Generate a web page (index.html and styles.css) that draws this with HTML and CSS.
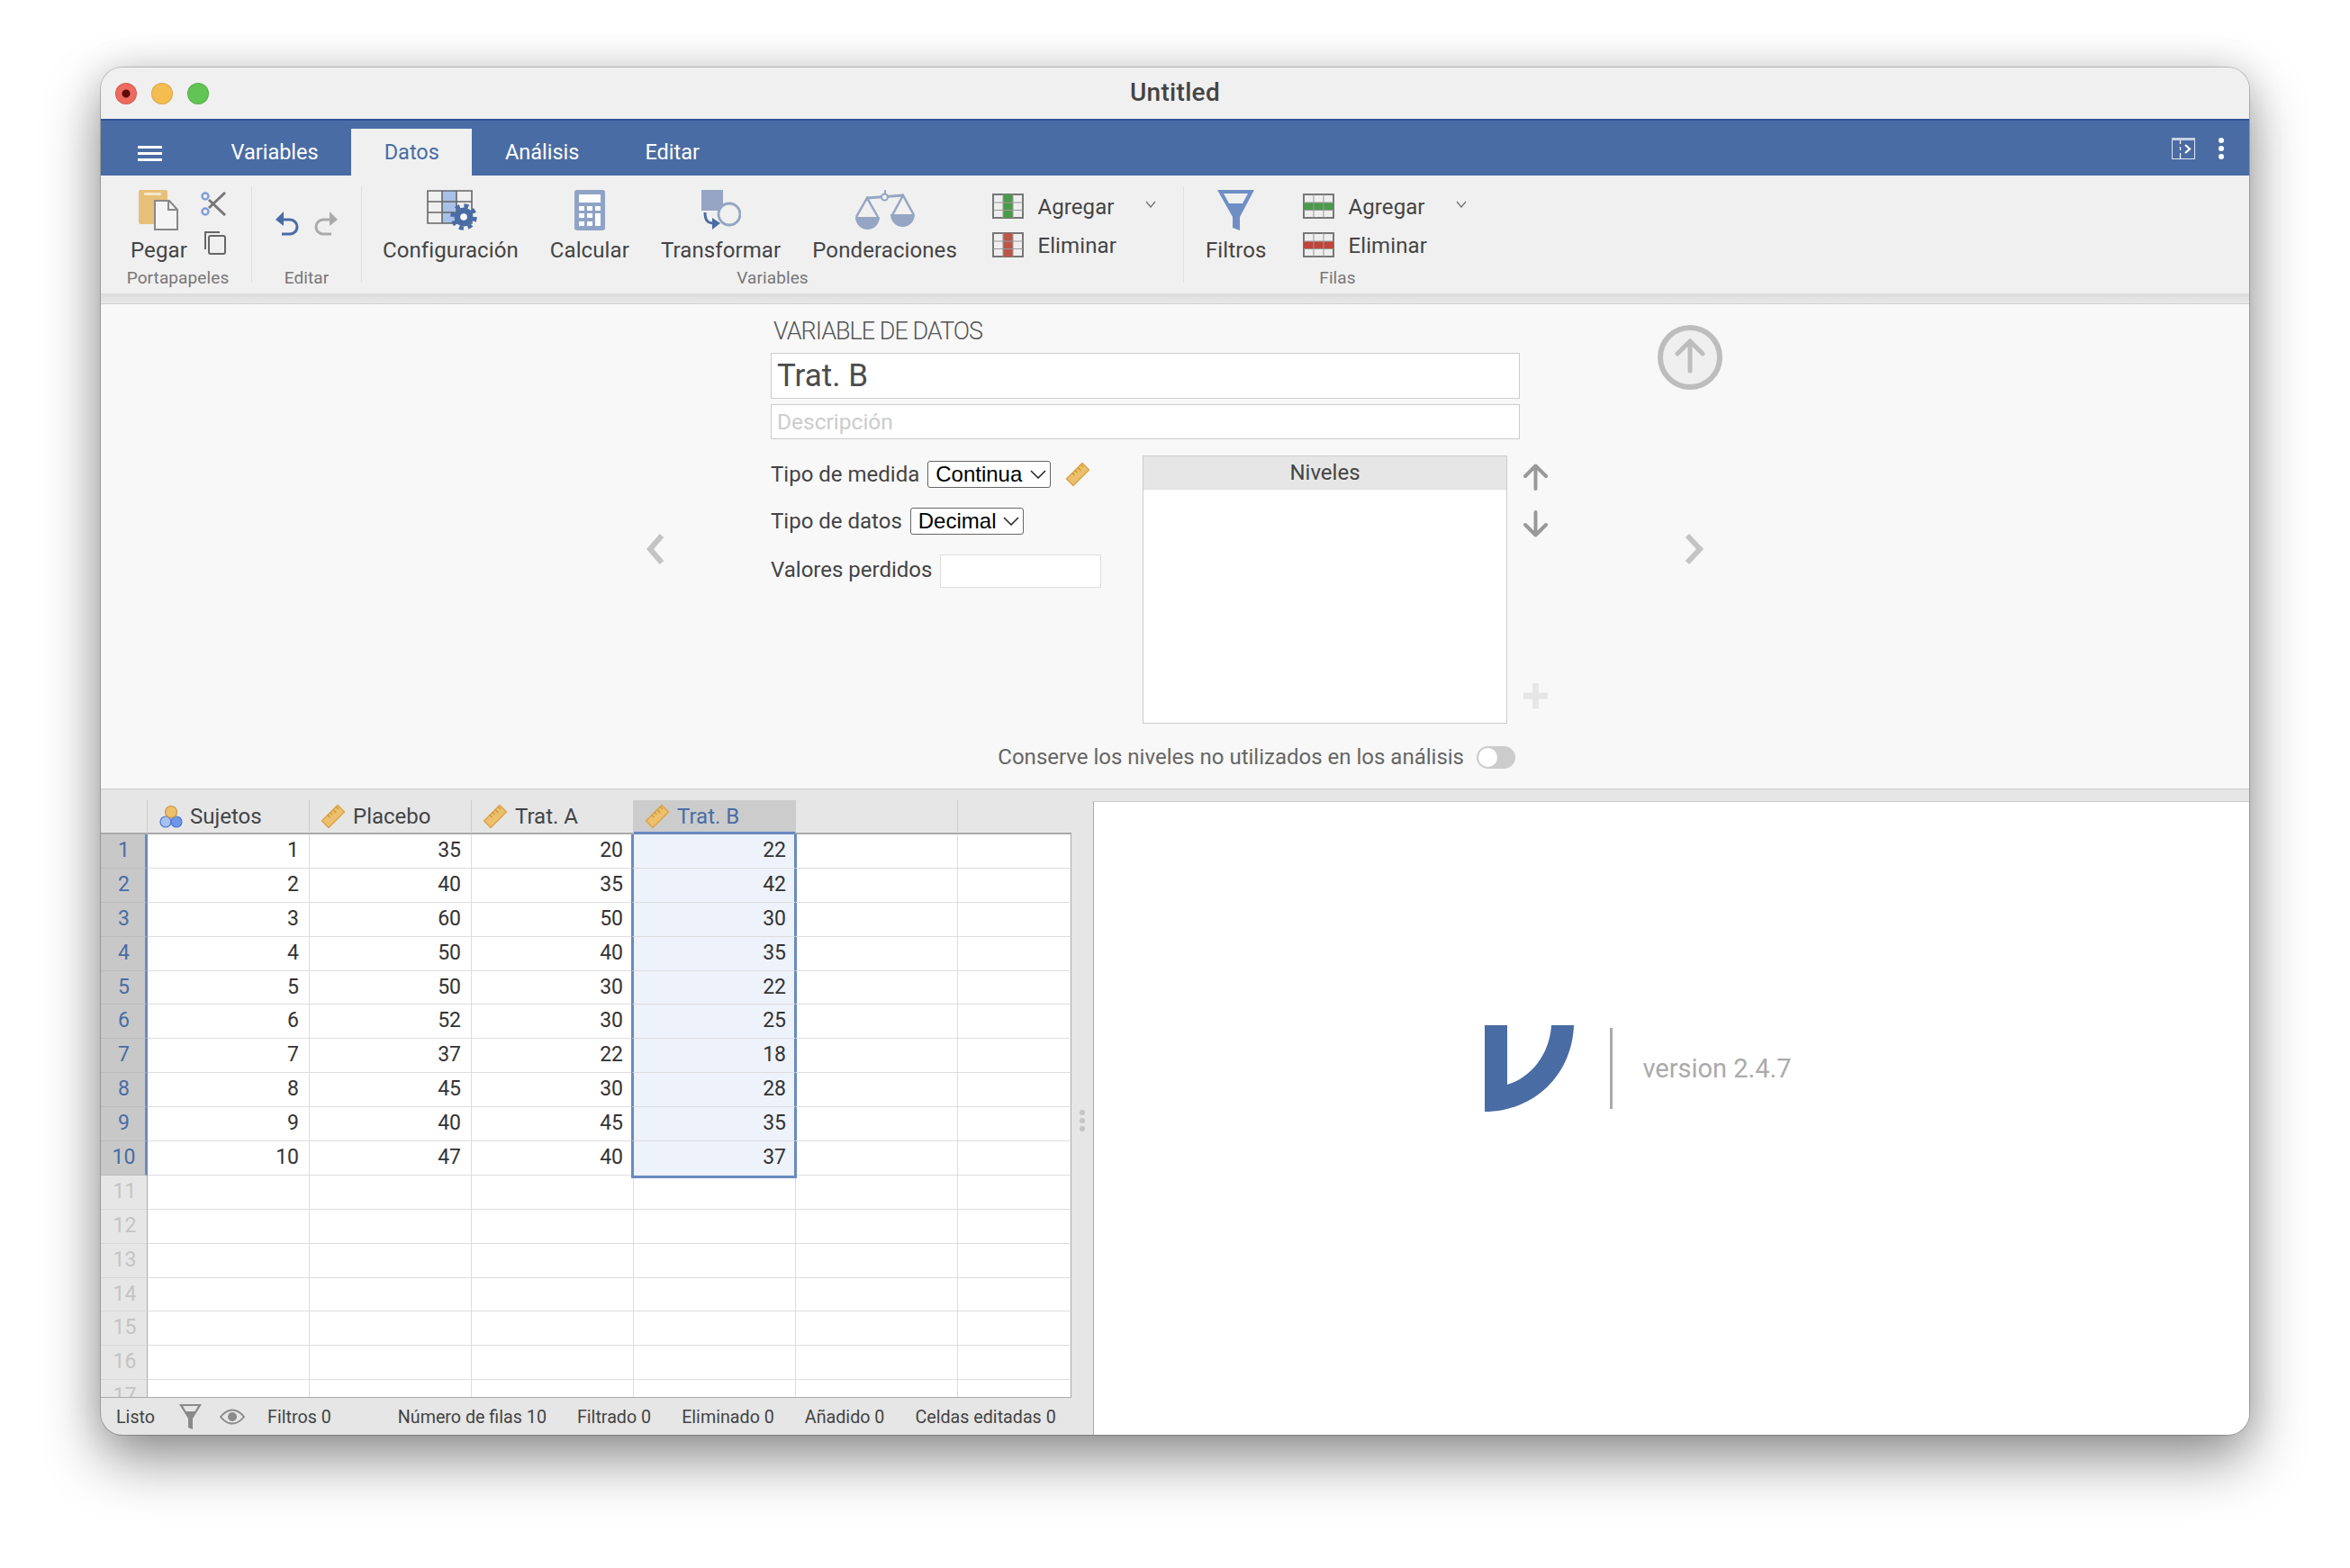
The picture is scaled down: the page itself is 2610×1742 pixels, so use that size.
FILE: index.html
```html
<!DOCTYPE html>
<html>
	<head>
		<title>Untitled</title>
		<link rel="stylesheet" href="styles.css">
	</head>

	<body>
		<svg class="defs" width="0" height="0">
			<symbol id="ruler" viewBox="0 0 28 28">
				<path d="M19 1.5L26.5 9 9 26.5 1.5 19z" fill="#ecc06c" stroke="#dba44a" stroke-width="1.5" stroke-linejoin="round"/>
				<path d="M8 12.500l2.500 2.500M11 9.500l2.500 2.500M14 6.500l3.500 3.500M17.500 3.500l2.500 2.500" stroke="#c99536" stroke-width="1.200" fill="none"/>
			</symbol>
			<symbol id="colGreen" viewBox="0 0 35 28">
				<rect x="1" y="1" width="33" height="26" fill="#eee" stroke="#777" stroke-width="2"/>
				<rect x="12" y="1" width="11" height="26" fill="#4c9a4c"/>
				<path d="M12 1v26M23 1v26M1 10h33M1 18.500h33" stroke="#999" stroke-width="1"/>
			</symbol>
			<symbol id="colRed" viewBox="0 0 35 28">
				<rect x="1" y="1" width="33" height="26" fill="#eee" stroke="#777" stroke-width="2"/>
				<rect x="12" y="1" width="11" height="26" fill="#b9564a"/>
				<path d="M12 1v26M23 1v26M1 10h33M1 18.500h33" stroke="#999" stroke-width="1"/>
			</symbol>
			<symbol id="rowGreen" viewBox="0 0 35 28">
				<rect x="1" y="1" width="33" height="26" fill="#eee" stroke="#777" stroke-width="2"/>
				<rect x="1" y="10" width="33" height="9" fill="#4c9a4c"/>
				<path d="M12 1v26M23 1v26M1 10h33M1 18.500h33" stroke="#999" stroke-width="1"/>
			</symbol>
			<symbol id="rowRed" viewBox="0 0 35 28">
				<rect x="1" y="1" width="33" height="26" fill="#eee" stroke="#777" stroke-width="2"/>
				<rect x="1" y="10" width="33" height="9" fill="#c0463c"/>
				<path d="M12 1v26M23 1v26M1 10h33M1 18.500h33" stroke="#999" stroke-width="1"/>
			</symbol>
			<symbol id="smallChevron" viewBox="0 0 12 8">
				<path d="M1 1l5 6 5-6" fill="none" stroke="#777" stroke-width="1.400"/>
			</symbol>
		</svg>

		<div class="window">
			<div class="titlebar">
				<div class="lights">
					<span class="light red"></span>
					<span class="light yellow"></span>
					<span class="light green"></span>
				</div>
				<div class="title">Untitled</div>
			</div>

			<div class="tabbar">
				<div class="hamburger"><span></span><span></span><span></span></div>
				<div class="tab">Variables</div>
				<div class="tab active">Datos</div>
				<div class="tab">Análisis</div>
				<div class="tab">Editar</div>
				<div class="tabbar-tools">
					<svg width="26" height="24" viewBox="0 0 26 24">
						<rect x="0.500" y="0.500" width="25" height="23" fill="none" stroke="#dfe6f2"/>
						<rect x="0" y="0" width="26" height="3" fill="#c5d0e3"/>
						<path d="M9.500 3v4M9.500 17v6M9.500 10v4" stroke="#fff" stroke-width="1.200"/>
						<path d="M15 8l5 4.500-5 4.500" fill="none" stroke="#fff" stroke-width="2.200"/>
					</svg>
					<div class="kebab"><span></span><span></span><span></span></div>
				</div>
			</div>

			<div class="ribbon">
				<div class="group group-clip">
					<div class="group-body">
						<div class="bigbtn bigbtn-paste">
							<svg class="bigicon" width="44" height="45" viewBox="0 0 44 45">
								<rect width="32" height="38" rx="2" fill="#e6c07b"/>
								<rect x="6" y="3" width="19" height="3" rx="1" fill="#f6e6c8"/>
								<path d="M18 12h16l9 10v22H18z" fill="#f4f4f4" stroke="#888" stroke-width="2"/>
								<path d="M33 12v10h10" fill="none" stroke="#888" stroke-width="2"/>
							</svg>
							<span>Pegar</span>
						</div>
						<div class="clip-tools">
							<svg width="29" height="27" viewBox="0 0 29 27">
								<path d="M9 9L27 26M9 18L27 1" stroke="#777" stroke-width="3" fill="none"/>
								<circle cx="5" cy="5" r="3.500" fill="#f0f0f0" stroke="#7f9fdc" stroke-width="2.500"/>
								<circle cx="5" cy="22" r="3.500" fill="#f0f0f0" stroke="#7f9fdc" stroke-width="2.500"/>
							</svg>
							<svg class="copy-icon" width="25" height="27" viewBox="0 0 25 27">
								<path d="M2 21V2h16" fill="none" stroke="#666" stroke-width="2"/>
								<rect x="6" y="6" width="18" height="20" rx="2" fill="none" stroke="#666" stroke-width="2"/>
							</svg>
						</div>
					</div>
					<div class="group-label">Portapapeles</div>
				</div>
				<div class="sep"></div>

				<div class="group group-edit">
					<div class="group-body">
						<svg width="28" height="28" viewBox="0 0 28 28">
							<path d="M6 10h11a8 8 0 0 1 0 16H8" fill="none" stroke="#4a6ca4" stroke-width="3"/>
							<path d="M10 1L1 10l9 7z" fill="#4a6ca4"/>
						</svg>
						<svg width="28" height="28" viewBox="0 0 28 28">
							<path d="M22 10H11a8 8 0 0 0 0 16h9" fill="none" stroke="#aaa" stroke-width="3"/>
							<path d="M18 1l9 9-9 7z" fill="#aaa"/>
						</svg>
					</div>
					<div class="group-label">Editar</div>
				</div>
				<div class="sep"></div>

				<div class="group group-vars">
					<div class="group-body">
						<div class="bigbtn">
							<svg class="bigicon icon-config" width="56" height="45" viewBox="0 0 56 45">
								<rect x="17" y="1" width="16" height="36" fill="#a9c0e8"/>
								<path d="M1 1h49v36H1zM17 1v36M33 1v36M1 13h49M1 25h49" fill="none" stroke="#666" stroke-width="1.600"/>
								<circle cx="41" cy="30" r="10.500" fill="#4a6ca4"/>
								<circle cx="41" cy="30" r="12.500" fill="none" stroke="#4a6ca4" stroke-width="4.500" stroke-dasharray="5 4.820"/>
								<circle cx="41" cy="30" r="3.800" fill="#fff"/>
							</svg>
							<span>Configuración</span>
						</div>
						<div class="bigbtn">
							<svg class="bigicon" width="34" height="45" viewBox="0 0 34 45">
								<rect width="34" height="45" rx="3" fill="#8fa3c6"/>
								<rect x="5" y="5" width="24" height="9" fill="#fff"/>
								<path d="M5 18h6v5H5zM14 18h6v5h-6zM23 18h6v5h-6zM5 26h6v5H5zM14 26h6v5h-6zM23 26h6v14h-6zM5 35h6v5H5zM14 35h6v5h-6z" fill="#fff"/>
							</svg>
							<span>Calcular</span>
						</div>
						<div class="bigbtn">
							<svg class="bigicon" width="44" height="45" viewBox="0 0 44 45">
								<rect x="0" y="0" width="24" height="23" fill="#95a5c3"/>
								<circle cx="31" cy="27" r="12" fill="#f0f0f0" stroke="#95a5c3" stroke-width="2.800"/>
								<path d="M4 25c0 9 3 12 10 12" fill="none" stroke="#4a6ca4" stroke-width="3"/>
								<path d="M12 31l9 6-9 7z" fill="#4a6ca4"/>
							</svg>
							<span>Transformar</span>
						</div>
						<div class="bigbtn">
							<svg class="bigicon" width="66" height="45" viewBox="0 0 66 45">
								<path d="M13 9l40-3" stroke="#95a5c3" stroke-width="3"/>
								<path d="M33 0v5" stroke="#95a5c3" stroke-width="2"/>
								<circle cx="32.500" cy="8" r="3.500" fill="#f0f0f0" stroke="#95a5c3" stroke-width="2"/>
								<path d="M1 30L13 9l12 21M41 28L53 6l12 22" fill="none" stroke="#95a5c3" stroke-width="2.500"/>
								<path d="M0 30h27a13.500 14 0 0 1-27 0zM39 27h27a13.500 14 0 0 1-27 0z" fill="#95a5c3"/>
							</svg>
							<span>Ponderaciones</span>
						</div>
						<div class="smallcol">
							<div class="smallbtn">
								<svg width="35" height="28"><use href="#colGreen"/></svg>
								<span>Agregar</span>
								<svg class="drop" width="12" height="8"><use href="#smallChevron"/></svg>
							</div>
							<div class="smallbtn">
								<svg width="35" height="28"><use href="#colRed"/></svg>
								<span>Eliminar</span>
							</div>
						</div>
					</div>
					<div class="group-label">Variables</div>
				</div>
				<div class="sep"></div>

				<div class="group group-rows">
					<div class="group-body">
						<div class="bigbtn bigbtn-filter">
							<svg class="bigicon" width="41" height="45" viewBox="0 0 41 45">
								<path d="M0 0h41L25 30v15l-8-3V30z" fill="#6f8fc4"/>
								<path d="M7 4h27l-6 11H13z" fill="#f0f0f0"/>
							</svg>
							<span>Filtros</span>
						</div>
						<div class="smallcol">
							<div class="smallbtn">
								<svg width="35" height="28"><use href="#rowGreen"/></svg>
								<span>Agregar</span>
								<svg class="drop" width="12" height="8"><use href="#smallChevron"/></svg>
							</div>
							<div class="smallbtn">
								<svg width="35" height="28"><use href="#rowRed"/></svg>
								<span>Eliminar</span>
							</div>
						</div>
					</div>
					<div class="group-label">Filas</div>
				</div>
			</div>
			<div class="ribbon-shade"></div>

			<div class="editor">
				<div class="nav-prev">
					<svg width="22" height="36" viewBox="0 0 22 36"><path d="M18 3L5 18l13 15" fill="none" stroke="#c4c4c4" stroke-width="6"/></svg>
				</div>

				<div class="form">
					<div class="form-title">VARIABLE DE DATOS</div>
					<input class="name-input" type="text" value="Trat. B">
					<input class="desc-input" type="text" placeholder="Descripción">

					<div class="form-columns">
						<div class="props">
							<div class="prop prop-measure">
								<label>Tipo de medida</label>
								<div class="select select-measure">Continua
									<svg width="18" height="10" viewBox="0 0 18 10"><path d="M1 1l8 8 8-8" fill="none" stroke="#222" stroke-width="1.500"/></svg>
								</div>
								<svg class="prop-ruler" width="28" height="30"><use href="#ruler"/></svg>
							</div>
							<div class="prop prop-type">
								<label>Tipo de datos</label>
								<div class="select select-type">Decimal
									<svg width="18" height="10" viewBox="0 0 18 10"><path d="M1 1l8 8 8-8" fill="none" stroke="#222" stroke-width="1.500"/></svg>
								</div>
							</div>
							<div class="prop prop-missing">
								<label>Valores perdidos</label>
								<input class="missing-input" type="text">
							</div>
						</div>

						<div class="levels">
							<div class="levels-head">Niveles</div>
						</div>

						<div class="level-tools">
							<svg width="27" height="30" viewBox="0 0 27 30"><path d="M13.500 28V3M2 14L13.500 2.500 25 14" fill="none" stroke="#999" stroke-width="4" stroke-linecap="round" stroke-linejoin="round"/></svg>
							<svg class="arrow-down" width="27" height="30" viewBox="0 0 27 30"><path d="M13.500 2v25M2 16l11.500 11.500L25 16" fill="none" stroke="#999" stroke-width="4" stroke-linecap="round" stroke-linejoin="round"/></svg>
							<svg class="level-add" width="27" height="28" viewBox="0 0 27 28"><path d="M13.500 0v28M0 14h27" stroke="#e6e6e6" stroke-width="7"/></svg>
						</div>
					</div>

					<div class="keep-row">
						<span>Conserve los niveles no utilizados en los análisis</span>
						<div class="toggle"><span></span></div>
					</div>
				</div>

				<div class="nav-next">
					<svg width="72" height="72" viewBox="0 0 72 72">
						<circle cx="36" cy="36" r="33" fill="#efefef" stroke="#bdbdbd" stroke-width="6"/>
						<path d="M36 51V18M22 32l14-14 14 14" fill="none" stroke="#bdbdbd" stroke-width="5" stroke-linecap="round" stroke-linejoin="round"/>
					</svg>
					<svg class="next-chevron" width="22" height="36" viewBox="0 0 22 36"><path d="M3 3l14 15L3 33" fill="none" stroke="#c4c4c4" stroke-width="6"/></svg>
				</div>
			</div>

			<div class="lower">
				<div class="data-col">
					<div class="sheet-wrap">
						<div class="sheet">
							<div class="hcell corner"></div>
							<div class="hcell hcell-id"><svg width="26" height="26" viewBox="0 0 26 26"><circle cx="7" cy="19" r="6" fill="#a8c0ee" stroke="#4a78d8" stroke-width="1.200"/><circle cx="19" cy="19" r="6" fill="#6f96e4" stroke="#4a78d8" stroke-width="1.200"/><circle cx="13" cy="8" r="6.500" fill="#ecc06c" stroke="#c9963c" stroke-width="1.200"/></svg>Sujetos</div>
							<div class="hcell"><svg width="28" height="28"><use href="#ruler"/></svg>Placebo</div>
							<div class="hcell"><svg width="28" height="28"><use href="#ruler"/></svg>Trat. A</div>
							<div class="hcell hcell-sel"><svg width="28" height="28"><use href="#ruler"/></svg>Trat. B</div>
							<div class="hcell"></div>
							<div class="hcell"></div>

							<div class="rownum on">1</div><div class="cell">1</div><div class="cell">35</div><div class="cell">20</div><div class="cell sel">22</div><div class="cell"></div><div class="cell"></div>
							<div class="rownum on">2</div><div class="cell">2</div><div class="cell">40</div><div class="cell">35</div><div class="cell sel">42</div><div class="cell"></div><div class="cell"></div>
							<div class="rownum on">3</div><div class="cell">3</div><div class="cell">60</div><div class="cell">50</div><div class="cell sel">30</div><div class="cell"></div><div class="cell"></div>
							<div class="rownum on">4</div><div class="cell">4</div><div class="cell">50</div><div class="cell">40</div><div class="cell sel">35</div><div class="cell"></div><div class="cell"></div>
							<div class="rownum on">5</div><div class="cell">5</div><div class="cell">50</div><div class="cell">30</div><div class="cell sel">22</div><div class="cell"></div><div class="cell"></div>
							<div class="rownum on">6</div><div class="cell">6</div><div class="cell">52</div><div class="cell">30</div><div class="cell sel">25</div><div class="cell"></div><div class="cell"></div>
							<div class="rownum on">7</div><div class="cell">7</div><div class="cell">37</div><div class="cell">22</div><div class="cell sel">18</div><div class="cell"></div><div class="cell"></div>
							<div class="rownum on">8</div><div class="cell">8</div><div class="cell">45</div><div class="cell">30</div><div class="cell sel">28</div><div class="cell"></div><div class="cell"></div>
							<div class="rownum on">9</div><div class="cell">9</div><div class="cell">40</div><div class="cell">45</div><div class="cell sel">35</div><div class="cell"></div><div class="cell"></div>
							<div class="rownum on">10</div><div class="cell">10</div><div class="cell">47</div><div class="cell">40</div><div class="cell sel sel-end">37</div><div class="cell"></div><div class="cell"></div>
							<div class="rownum">11</div><div class="cell"></div><div class="cell"></div><div class="cell"></div><div class="cell"></div><div class="cell"></div><div class="cell"></div>
							<div class="rownum">12</div><div class="cell"></div><div class="cell"></div><div class="cell"></div><div class="cell"></div><div class="cell"></div><div class="cell"></div>
							<div class="rownum">13</div><div class="cell"></div><div class="cell"></div><div class="cell"></div><div class="cell"></div><div class="cell"></div><div class="cell"></div>
							<div class="rownum">14</div><div class="cell"></div><div class="cell"></div><div class="cell"></div><div class="cell"></div><div class="cell"></div><div class="cell"></div>
							<div class="rownum">15</div><div class="cell"></div><div class="cell"></div><div class="cell"></div><div class="cell"></div><div class="cell"></div><div class="cell"></div>
							<div class="rownum">16</div><div class="cell"></div><div class="cell"></div><div class="cell"></div><div class="cell"></div><div class="cell"></div><div class="cell"></div>
							<div class="rownum">17</div><div class="cell"></div><div class="cell"></div><div class="cell"></div><div class="cell"></div><div class="cell"></div><div class="cell"></div>
						</div>
						<div class="gutter"><span></span><span></span><span></span></div>
					</div>

					<div class="statusbar">
						<span>Listo</span>
						<svg class="status-filter" width="25" height="28" viewBox="0 0 25 28">
							<path d="M0 0h25L15 16v12l-5-2V16z" fill="#8a8a8a"/>
							<path d="M4 2h17l-3.500 6h-10z" fill="#e6e6e6"/>
						</svg>
						<svg class="status-eye" width="28" height="18" viewBox="0 0 28 18">
							<path d="M1 9c4-5 8-7.500 13-7.500S23 4 27 9c-4 5-8 7.500-13 7.500S5 14 1 9z" fill="none" stroke="#8a8a8a" stroke-width="2"/>
							<circle cx="14" cy="9" r="5" fill="#8a8a8a"/>
						</svg>
						<span class="status-filters">Filtros 0</span>
						<span class="status-rows">Número de filas 10</span>
						<span>Filtrado 0</span>
						<span>Eliminado 0</span>
						<span>Añadido 0</span>
						<span>Celdas editadas 0</span>
					</div>
				</div>

				<div class="results">
					<svg class="logo" width="99" height="96" viewBox="0 0 99 96">
						<path d="M0 0H25V66C52 58 72 32 74 0H99C97 55 55 96 0 96Z" fill="#4a6ca4"/>
					</svg>
					<div class="logo-rule"></div>
					<div class="version">version 2.4.7</div>
				</div>
			</div>
		</div>
	</body>
</html>
```

FILE: styles.css
```css
html, body {
	margin: 0px;
	padding: 0px;
	background: #fff;
	font-family: Roboto, "Liberation Sans", sans-serif;
	color: #444;
}

body {
	box-sizing: border-box;
	width: 2610px;
	height: 1742px;
	padding: 75px 112px 148px 112px;
	overflow: hidden;
	display: flex;
}

.defs {
	position: absolute;
}

.window {
	flex: 1;
	display: flex;
	flex-direction: column;
	min-width: 0;
	border-radius: 24px;
	overflow: hidden;
	background: #e6e6e6;
	box-shadow: 0px 0px 0px 1px rgba(0,0,0,0.2), 0px 28px 64px rgba(0,0,0,0.42), 0px 0px 40px rgba(0,0,0,0.12);
}

/* title bar */
.titlebar {
	height: 57px;
	flex: none;
	position: relative;
	display: flex;
	align-items: center;
	justify-content: center;
	background: #f1f0f1;
}

.lights {
	position: absolute;
	left: 16px;
	top: 17px;
	display: flex;
	gap: 16px;
}

.light {
	width: 24px;
	height: 24px;
	border-radius: 50%;
	box-sizing: border-box;
	border: 1px solid rgba(0,0,0,0.12);
}

.red { background: radial-gradient(circle, #5c0a04 0px, #5c0a04 4px, #ee6a5f 5px); }
.yellow { background: #f5bd4f; }
.green { background: #61c454; }

.title {
	font-size: 28px;
	letter-spacing: 0.3px;
	font-weight: 500;
	color: #444;
	margin-top: -2px;
}

/* tabs */
.tabbar {
	height: 63px;
	flex: none;
	box-sizing: border-box;
	display: flex;
	align-items: flex-end;
	padding: 0px 22px 0px 41px;
	background: #4a6ca4;
	border-top: 2px solid #2f5496;
}

.hamburger {
	width: 27px;
	height: 17px;
	margin: 0px 40px 16px 0px;
	display: flex;
	flex-direction: column;
	justify-content: space-between;
}

.hamburger span {
	height: 3px;
	background: #fff;
}

.tab {
	height: 52px;
	line-height: 52px;
	padding: 0px 36.500px;
	font-size: 23.500px;
	color: #fff;
}

.tab.active {
	background: #f0f0f0;
	color: #4a6ca4;
}

.tabbar-tools {
	margin-left: auto;
	align-self: center;
	display: flex;
	align-items: center;
	gap: 26px;
}

.kebab {
	width: 9px;
	height: 24px;
	display: flex;
	flex-direction: column;
	justify-content: space-between;
	margin-right: 3px;
}

.kebab span {
	width: 6px;
	height: 6px;
	border-radius: 50%;
	background: #fff;
}

/* ribbon */
.ribbon {
	height: 131px;
	flex: none;
	display: flex;
	align-items: flex-start;
	background: #f0f0f0;
	letter-spacing: 0.1px;
}

.group {
	box-sizing: border-box;
	height: 131px;
	display: flex;
	flex-direction: column;
	flex: none;
}

.group-body {
	flex: 1;
	display: flex;
	padding-top: 16px;
}

.group-label {
	height: 24px;
	line-height: 24px;
	margin-bottom: 5px;
	text-align: center;
	font-size: 19px;
	color: #777;
}

.group-clip { width: 167px; }
.group-clip .group-label { padding-left: 4px; }
.group-edit { width: 121px; }
.group-vars { width: 912px; }
.group-rows { width: 341px; }

.group-edit .group-body {
	justify-content: center;
	gap: 15px;
	padding-top: 39px;
}

.group-vars .group-body {
	padding-left: 5.500px;
}

.sep {
	width: 1px;
	height: 107px;
	margin-top: 12px;
	background: #e0e0e0;
	flex: none;
}

.bigbtn {
	display: flex;
	flex-direction: column;
	align-items: center;
	padding: 0px 17.500px;
	font-size: 24px;
	color: #444;
	line-height: 29px;
	white-space: nowrap;
}

.bigicon {
	display: block;
	height: 45px;
	margin-bottom: 8px;
}

.icon-config {
	margin-left: 3px;
}

.bigbtn-paste {
	padding: 0px 0px 0px 33px;
}

.bigbtn-filter {
	padding: 0px 0px 0px 24px;
}

.clip-tools {
	display: flex;
	flex-direction: column;
	gap: 16px;
	margin: 2px 0px 0px 15px;
}

.copy-icon {
	margin-left: 3px;
}

.smallcol {
	display: flex;
	flex-direction: column;
	gap: 15px;
	margin: 4px 0px 0px 22px;
}

.group-rows .smallcol {
	margin-left: 41px;
}

.smallbtn {
	display: flex;
	align-items: center;
	gap: 15px;
	height: 28px;
	font-size: 24px;
	color: #444;
}

.smallbtn span {
	margin-top: 2px;
}

.drop {
	margin: -4px 0px 0px 19px;
}

.ribbon-shade {
	height: 12px;
	flex: none;
	box-sizing: border-box;
	background: linear-gradient(to bottom, #dcdcdc, #e8e8e8);
	border-bottom: 1px solid #cfcfcf;
}

/* variable editor */
.editor {
	height: 539px;
	flex: none;
	box-sizing: border-box;
	display: flex;
	padding-left: 605px;
	background: #f8f8f8;
	border-bottom: 1px solid #ccc;
}

.nav-prev {
	width: 139px;
	flex: none;
	padding-top: 254px;
}

.form {
	width: 863px;
	flex: none;
}

.form-title {
	height: 42px;
	line-height: 36px;
	padding-left: 3px;
	font-size: 27px;
	font-weight: 300;
	letter-spacing: -1px;
	color: #555;
	white-space: nowrap;
	margin-top: 12px;
}

input {
	display: block;
	box-sizing: border-box;
	background: #fff;
	border: 1px solid #ccc;
	outline: none;
	font-family: Roboto, "Liberation Sans", sans-serif;
	padding: 0px 6px;
}

.name-input {
	width: 832px;
	height: 51px;
	font-size: 35px;
	color: #4c4c4c;
}

.desc-input {
	width: 832px;
	height: 39px;
	margin-top: 6px;
	font-size: 24.500px;
}

.desc-input::placeholder {
	color: #ccc;
}

.form-columns {
	display: flex;
	margin-top: 18px;
	height: 298px;
}

.props {
	width: 413px;
	flex: none;
	padding-top: 6px;
}

.prop {
	display: flex;
	align-items: center;
	font-size: 24px;
	color: #444;
	height: 30px;
}

.prop-type {
	margin-top: 22px;
}

.prop-missing {
	margin-top: 22px;
	height: 37px;
}

.prop-missing label {
	margin-top: -3px;
}

.select {
	box-sizing: border-box;
	height: 30px;
	display: flex;
	align-items: center;
	justify-content: space-between;
	padding: 0px 4px 0px 8px;
	background: #fff;
	border: 1px solid #666;
	border-radius: 3px;
	font-family: "Liberation Sans", Arial, sans-serif;
	font-size: 24px;
	color: #000;
}

.select-measure {
	width: 137px;
	margin-left: 9px;
}

.select-type {
	width: 126px;
	margin-left: 9px;
}

.prop-ruler {
	margin-left: 16px;
}

.missing-input {
	width: 179px;
	height: 37px;
	margin-left: 9px;
	border-color: #ddd;
}

.levels {
	width: 405px;
	box-sizing: border-box;
	flex: none;
	background: #fff;
	border: 1px solid #ccc;
}

.levels-head {
	height: 36px;
	line-height: 36px;
	text-align: center;
	font-size: 24px;
	color: #444;
	background: #e6e6e6;
	border-bottom: 1px solid #ddd;
}

.level-tools {
	display: flex;
	flex-direction: column;
	padding: 9px 0px 17px 18px;
	box-sizing: border-box;
}

.arrow-down {
	margin-top: 22px;
}

.level-add {
	margin-top: auto;
}

.keep-row {
	width: 827px;
	margin-top: 23px;
	display: flex;
	align-items: center;
	justify-content: flex-end;
	gap: 14px;
	font-size: 24px;
	color: #666;
}

.toggle {
	width: 43px;
	height: 25px;
	border-radius: 13px;
	background: #ccc;
	box-sizing: border-box;
	padding: 2px;
}

.toggle span {
	display: block;
	width: 21px;
	height: 21px;
	border-radius: 50%;
	background: #fff;
}

.nav-next {
	margin: 23px 0px 0px 122px;
	display: flex;
	flex-direction: column;
	align-items: flex-start;
}

.next-chevron {
	margin: 159px 0px 0px 30px;
}

/* data sheet */
.lower {
	flex: 1;
	display: flex;
	min-height: 0;
}

.data-col {
	width: 1102px;
	flex: none;
	display: flex;
	flex-direction: column;
}

.sheet-wrap {
	flex: 1;
	min-height: 0;
	display: flex;
	padding-top: 12px;
}

.sheet {
	width: 1078px;
	flex: none;
	box-sizing: border-box;
	display: grid;
	grid-template-columns: 52px 180px 180px 180px 180px 180px 126px;
	grid-template-rows: 38px repeat(17, 37.9px);
	overflow: hidden;
	border-bottom: 1px solid #aaa;
	font-size: 23px;
	color: #333;
	background: #fff;
}

.hcell {
	display: flex;
	align-items: center;
	gap: 8px;
	padding-left: 12px;
	background: #e6e6e6;
	border-right: 1px solid #ccc;
	border-bottom: 2px solid #aaa;
	box-sizing: border-box;
	font-size: 24px;
	color: #444;
}

.hcell.corner {
	padding: 0px;
}

.hcell-id {
	padding-left: 13px;
}

.hcell:nth-child(7) {
	border-right: none;
}

.hcell-sel {
	background: #ccc;
	color: #4a6ca4;
	border-bottom: 3px solid #6a8ac0;
}

.rownum {
	display: flex;
	align-items: center;
	justify-content: center;
	box-sizing: border-box;
	padding: 0px 0px 2px 2px;
	background: #e6e6e6;
	color: #c4c4c4;
	border-bottom: 1px solid #d8d8d8;
	border-right: 1px solid #aaa;
}

.rownum.on {
	background: #c8c8c8;
	color: #4a6ca4;
	border-bottom-color: #bbb;
	border-right: 3px solid #6a8ac0;
}

.cell {
	display: flex;
	align-items: center;
	justify-content: flex-end;
	box-sizing: border-box;
	padding: 0px 11px 2px 0px;
	border-right: 1px solid #ddd;
	border-bottom: 1px solid #ddd;
}

.cell:nth-child(7n) {
	border-right-color: #aaa;
}

.cell.sel {
	background: #eef2fb;
	border-left: 3px solid #6a8ac0;
	border-right: 3px solid #6a8ac0;
	margin: 0px -1px 0px -3px;
	padding-right: 9px;
}

.cell.sel-end {
	border-bottom: 3px solid #6a8ac0;
	margin-bottom: -3px;
	position: relative;
}

.gutter {
	flex: 1;
	display: flex;
	flex-direction: column;
	align-items: center;
	gap: 3px;
	padding-top: 344px;
}

.gutter span {
	width: 6px;
	height: 6px;
	border-radius: 50%;
	background: #c4c4c4;
}

.statusbar {
	height: 41px;
	box-sizing: border-box;
	flex: none;
	display: flex;
	align-items: center;
	padding: 1px 0px 0px 17px;
	gap: 34px;
	font-size: 19.700px;
	color: #444;
	white-space: nowrap;
}

.status-filter {
	margin: -1px 0px 0px -7px;
}

.status-eye {
	margin: -1px 0px 0px -14px;
}

.status-filters {
	margin-left: -9px;
}

.status-rows {
	margin-left: 40px;
}

.results {
	flex: 1;
	min-width: 0;
	margin-top: 13px;
	box-sizing: border-box;
	border-left: 1px solid #aaa;
	border-top: 1px solid #ccc;
	background: #fff;
	display: flex;
	align-items: center;
	justify-content: center;
	padding: 0px 74px 112px 0px;
}

.logo {
	margin-right: 40px;
}

.logo-rule {
	width: 3px;
	height: 90px;
	background: #aaa;
	margin-right: 33px;
}

.version {
	font-size: 29px;
	color: #aaa;
}
```
